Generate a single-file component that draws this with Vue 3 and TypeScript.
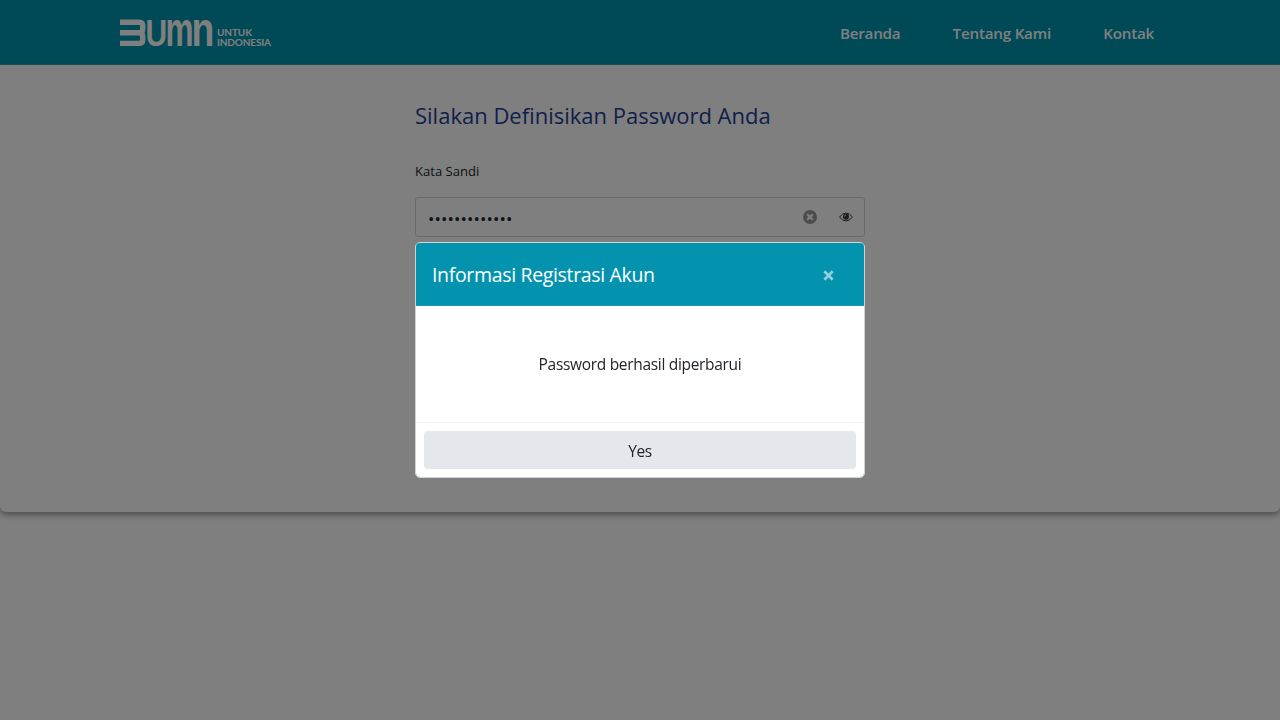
<script setup lang="ts">
import { ref } from 'vue'

const links: string[] = ['Beranda', 'Tentang Kami', 'Kontak']
const password = ref('•'.repeat(13))
const open = ref(true)
</script>

<template>
  <div class="page">
    <section class="sheet">
      <header class="navbar">
        <svg class="logo" width="156" height="60" viewBox="0 -15 156 60">
          <path d="M0 5.2H19Q22.7 5.2 22.7 8.8V11.8Q22.7 15.8 19 15.8H0M19 15.8Q22.7 15.8 22.7 19.8V22.8Q22.7 26.4 19 26.4H0" fill="none" stroke="#fff" stroke-width="5.4" />
          <g class="wordmark">
            <text transform="translate(25.4 28.7) scale(.8 1)" font-size="37.5">U</text>
            <text transform="translate(45.6 29) scale(.65 1)" font-size="48.5">m</text>
            <text transform="translate(71.6 29) scale(.77 1)" font-size="48.5">n</text>
          </g>
          <text class="tagline" x="97" y="18.7" textLength="35">UNTUK</text>
          <text class="tagline" x="97" y="28.7" textLength="54">INDONESIA</text>
        </svg>
        <nav class="links">
          <a v-for="link in links" :key="link">{{ link }}</a>
        </nav>
      </header>
      <main class="form">
        <h1>Silakan Definisikan Password Anda</h1>
        <label>Kata Sandi</label>
        <div class="field">
          <span class="dots">{{ password }}</span>
          <svg class="clear" width="14" height="14" viewBox="0 0 14 14">
            <circle cx="7" cy="7" r="7" fill="#999" />
            <path d="M4.2 4.2l5.6 5.6M9.8 4.2L4.2 9.8" stroke="#fff" stroke-width="2.3" />
          </svg>
          <svg class="eye" width="14" height="10" viewBox="0 0 14 10">
            <path d="M.5 5Q7-3 13.5 5Q7 13 .5 5Z" fill="none" stroke="#343a40" stroke-width="1" />
            <circle cx="7" cy="4.7" r="3" fill="#343a40" />
            <path d="M5.4 4.6A1.7 1.7 0 0 1 7 3" fill="none" stroke="#fff" stroke-width=".8" />
          </svg>
        </div>
      </main>
    </section>

    <div v-if="open" class="backdrop">
      <div class="modal" role="dialog">
        <div class="modal-header">
          <h2>Informasi Registrasi Akun</h2>
          <button class="close" aria-label="Close" @click="open = false">
            <svg width="11" height="11" viewBox="0 0 11 11">
              <path d="M1.3 1.3l8.4 8.4M9.7 1.3L1.3 9.7" stroke="#8fd0dc" stroke-width="2.7" />
            </svg>
          </button>
        </div>
        <div class="modal-body"><span>Password berhasil diperbarui</span></div>
        <div class="modal-footer">
          <button class="yes" @click="open = false">Yes</button>
        </div>
      </div>
    </div>
  </div>
</template>

<style>
body {
  background: #fff;
}
</style>

<style scoped>
* {
  box-sizing: border-box;
}
.page {
  height: 720px;
  overflow: hidden;
  font-family: "Open Sans", "Noto Sans", sans-serif;
  color: #212529;
}
.sheet {
  height: 512px;
  border-radius: 0 0 6px 6px;
  box-shadow: 0 3px 6px rgba(0, 0, 0, .4);
}
.navbar {
  height: 65px;
  padding: 0 126px 0 120px;
  display: flex;
  justify-content: space-between;
  align-items: center;
  background: #0093ad;
  border-bottom: 1px solid #209fb4;
}
.logo {
  overflow: visible;
}
.wordmark {
  font-family: "Liberation Sans", sans-serif;
  font-weight: 700;
  fill: #fff;
}
.tagline {
  font: 700 10px Lato, sans-serif;
  fill: #fff;
}
.links {
  display: flex;
  gap: 52.2px;
  padding-top: 2px;
}
.links a {
  color: #fff;
  font-size: 15.2px;
  font-weight: 600;
  letter-spacing: -.22px;
}
.form {
  width: 450px;
  margin: 0 auto;
  padding-top: 33px;
}
h1 {
  margin: 0;
  font-size: 22px;
  font-weight: 400;
  line-height: 34px;
  color: #1f3f94;
  white-space: nowrap;
}
label {
  display: block;
  margin-top: 29px;
  font-size: 13px;
  line-height: 20px;
  letter-spacing: .04px;
}
.field {
  height: 40px;
  margin-top: 16px;
  padding: 0 11px 0 12px;
  display: flex;
  align-items: center;
  border: 1px solid #d2d2d6;
  border-radius: 3px;
}
.dots {
  flex: 1;
  font-size: 17px;
  line-height: 20px;
  letter-spacing: .1px;
  padding-top: 3px;
}
.clear {
  margin-right: 22px;
}
.backdrop {
  position: fixed;
  inset: 0;
  display: flex;
  align-items: center;
  justify-content: center;
  background: rgba(0, 0, 0, .5);
}
.modal {
  width: 450px;
  height: 236px;
  display: flex;
  flex-direction: column;
  background: #fff;
  background-clip: padding-box;
  border: 1px solid #cfd4d6;
  border-radius: 5px;
  overflow: hidden;
}
.modal-header {
  height: 63px;
  padding: 1px 30px 0 16px;
  display: flex;
  align-items: center;
  justify-content: space-between;
  background: #0393af;
  border-bottom: 1px solid #1c9cb4;
}
h2 {
  margin: 0;
  font-size: 19.5px;
  font-weight: 400;
  letter-spacing: -.34px;
  color: #fff;
}
.close {
  padding: 1px 0 0;
  border: 0;
  background: none;
  line-height: 0;
}
.modal-body {
  flex: 1;
  display: flex;
  align-items: center;
  justify-content: center;
  font-size: 15.5px;
  letter-spacing: -.31px;
}
.modal-footer {
  padding: 8px;
  border-top: 1px solid #eff1f3;
}
.yes {
  display: block;
  width: 100%;
  height: 38px;
  padding: 2px 0 0;
  border: 0;
  border-radius: 4px;
  background: #e4e7eb;
  color: #212529;
  font: 15.5px "Open Sans", sans-serif;
  letter-spacing: -.35px;
}
</style>
